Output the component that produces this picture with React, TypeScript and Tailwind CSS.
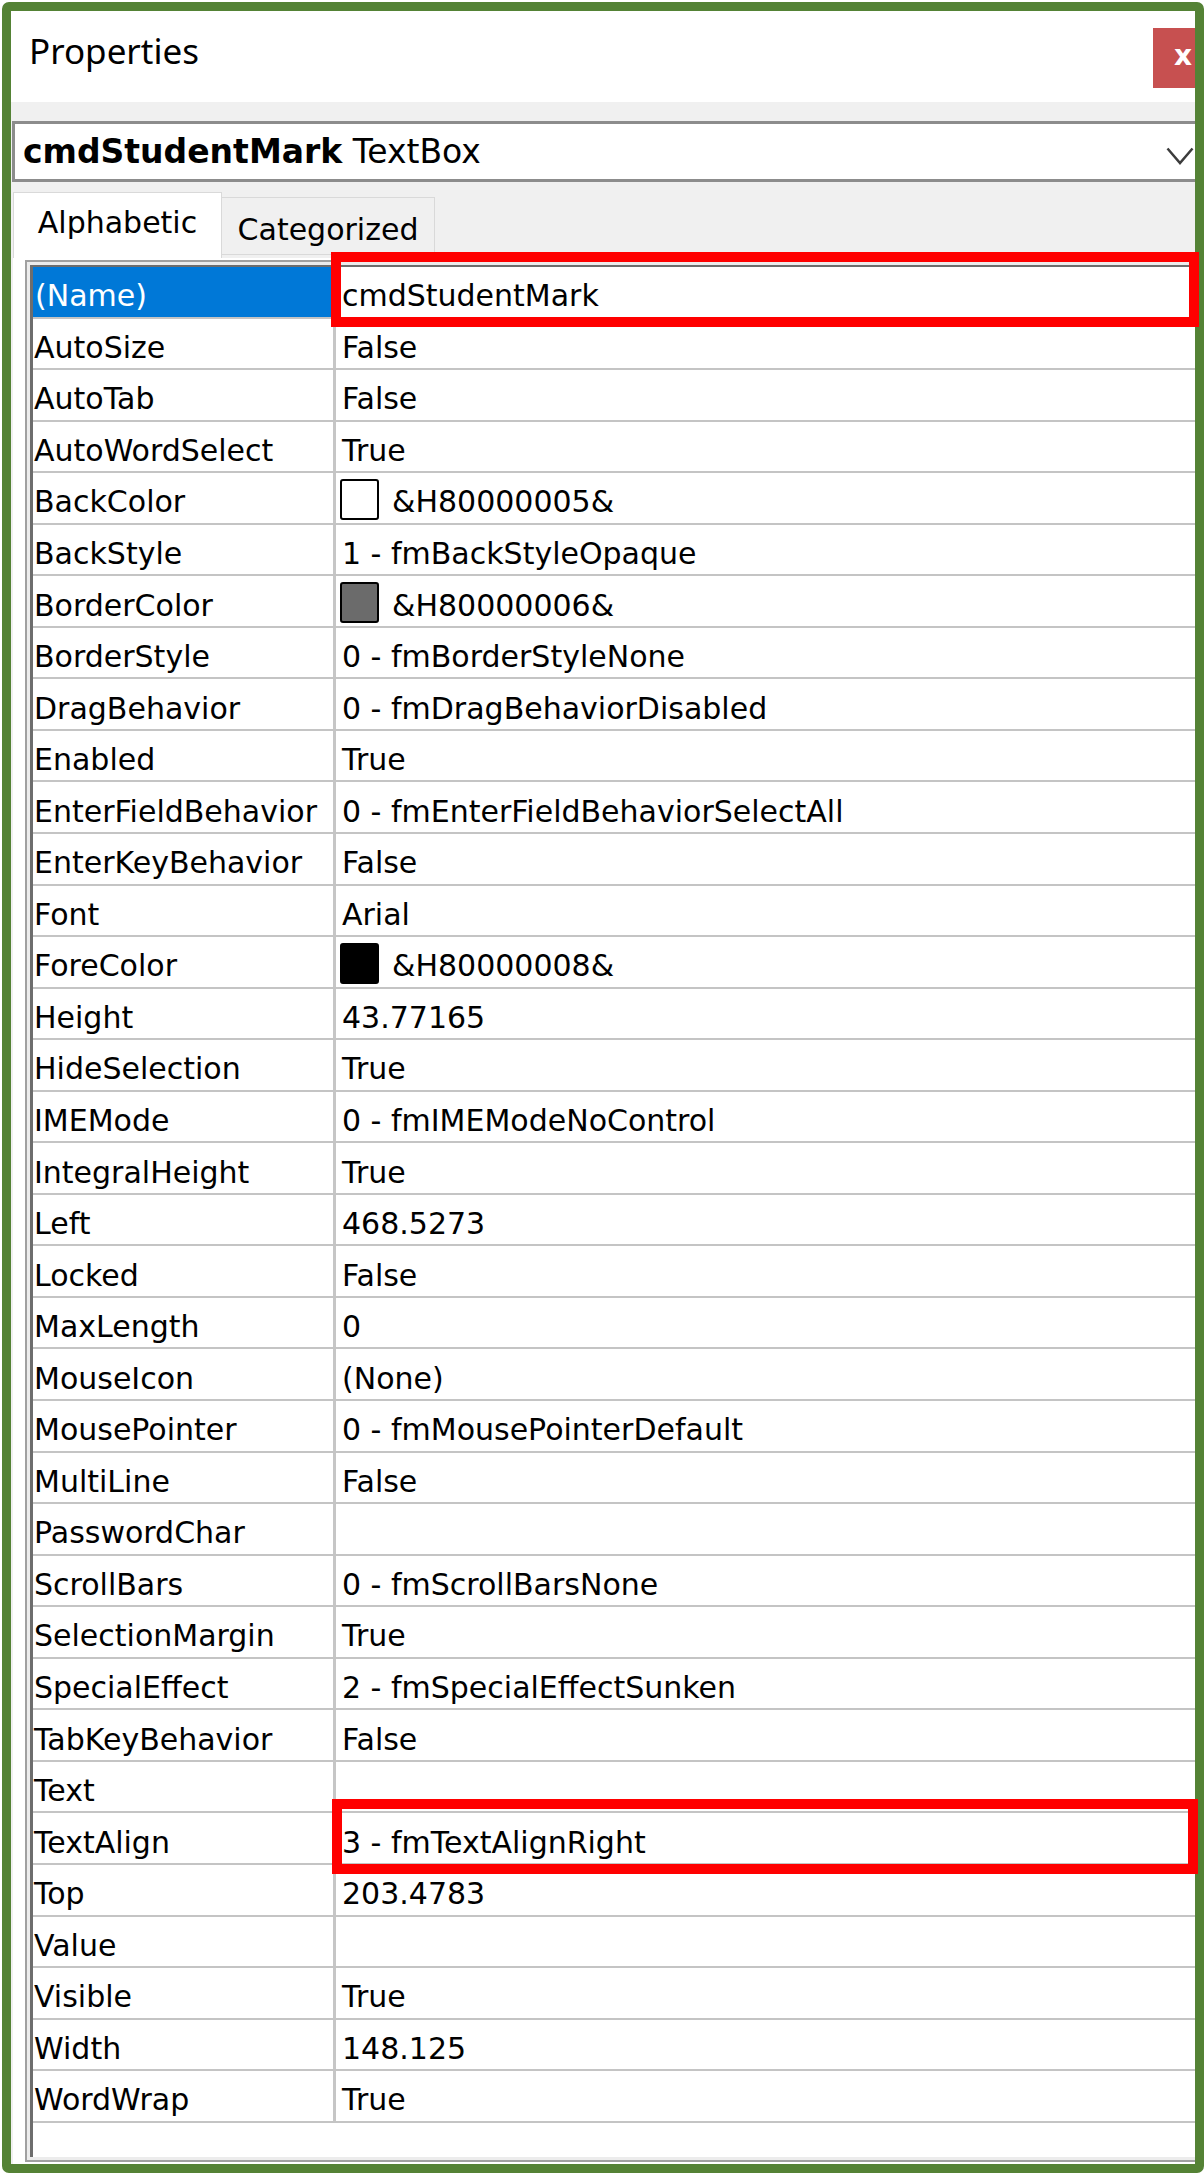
import React from "react";

type Row = {
  name: string;
  value?: string;
  swatch?: string;
  selected?: boolean;
};

const rows: Row[] = [
  { name: "(Name)", value: "cmdStudentMark", selected: true },
  { name: "AutoSize", value: "False" },
  { name: "AutoTab", value: "False" },
  { name: "AutoWordSelect", value: "True" },
  { name: "BackColor", value: "&H80000005&", swatch: "bg-white" },
  { name: "BackStyle", value: "1 - fmBackStyleOpaque" },
  { name: "BorderColor", value: "&H80000006&", swatch: "bg-[#6b6b6b]" },
  { name: "BorderStyle", value: "0 - fmBorderStyleNone" },
  { name: "DragBehavior", value: "0 - fmDragBehaviorDisabled" },
  { name: "Enabled", value: "True" },
  { name: "EnterFieldBehavior", value: "0 - fmEnterFieldBehaviorSelectAll" },
  { name: "EnterKeyBehavior", value: "False" },
  { name: "Font", value: "Arial" },
  { name: "ForeColor", value: "&H80000008&", swatch: "bg-black" },
  { name: "Height", value: "43.77165" },
  { name: "HideSelection", value: "True" },
  { name: "IMEMode", value: "0 - fmIMEModeNoControl" },
  { name: "IntegralHeight", value: "True" },
  { name: "Left", value: "468.5273" },
  { name: "Locked", value: "False" },
  { name: "MaxLength", value: "0" },
  { name: "MouseIcon", value: "(None)" },
  { name: "MousePointer", value: "0 - fmMousePointerDefault" },
  { name: "MultiLine", value: "False" },
  { name: "PasswordChar", value: "" },
  { name: "ScrollBars", value: "0 - fmScrollBarsNone" },
  { name: "SelectionMargin", value: "True" },
  { name: "SpecialEffect", value: "2 - fmSpecialEffectSunken" },
  { name: "TabKeyBehavior", value: "False" },
  { name: "Text", value: "" },
  { name: "TextAlign", value: "3 - fmTextAlignRight" },
  { name: "Top", value: "203.4783" },
  { name: "Value", value: "" },
  { name: "Visible", value: "True" },
  { name: "Width", value: "148.125" },
  { name: "WordWrap", value: "True" },
];

function PropRow({ row }: { row: Row }) {
  return (
    <div className="flex h-[51.55px] shrink-0 border-b-2 border-[#c4c4c4]">
      <div
        className={
          row.selected
            ? "w-[303px] shrink-0 border-r-[3px] border-[#c6c6c6] bg-[#0078d7] text-white flex items-center pt-[8px] pl-[2px] whitespace-nowrap"
            : "w-[303px] shrink-0 border-r-[3px] border-[#c6c6c6] text-black flex items-center pt-[8px] pl-[1px] whitespace-nowrap"
        }
      >
        <span className="leading-[35px]">{row.name}</span>
      </div>
      {row.swatch ? (
        <div className="flex-1 flex items-center pt-[8px] pl-[4px] whitespace-nowrap text-black">
          <div
            className={
              "self-start -mt-[2px] w-[39px] h-[41px] shrink-0 border-2 border-black rounded-[3px] " +
              row.swatch
            }
          />
          <span className="ml-[13px] leading-[35px]">{row.value}</span>
        </div>
      ) : (
        <div className="flex-1 flex items-center pt-[8px] pl-[6px] whitespace-nowrap text-black">
          <span className="leading-[35px]">{row.value}</span>
        </div>
      )}
    </div>
  );
}

export default function App() {
  return (
    <div className="relative w-[1204px] h-[2174px] bg-white pl-[2px] pt-[2px] font-['DejaVu_Sans',sans-serif]">
      <div className="w-[1202px] h-[2171px] border-[9px] border-[#548235] rounded-[7px] overflow-hidden flex flex-col bg-[#f0f0f0]">
        {/* Title bar */}
        <div className="h-[91px] shrink-0 bg-white flex items-start justify-between">
          <span className="pl-[18px] mt-[16px] leading-[48px] text-[35px] text-black font-['Noto_Sans',sans-serif]">
            Properties
          </span>
          <div className="mt-[17px] w-[60px] h-[60px] shrink-0 -mr-[18px] bg-[#c75050] flex items-center justify-center text-white font-bold text-[28px] leading-none pb-[4px]">
            x
          </div>
        </div>
        <div className="h-[19px] shrink-0" />
        {/* Object combo */}
        <div className="h-[61px] shrink-0 ml-[1px] bg-white border-l-[3px] border-y-[3px] border-[#8c8c8c] flex items-center pl-[8px] text-[33px] text-black whitespace-nowrap">
          <span className="leading-[38px]">
            <span className="font-bold">cmdStudentMark</span> TextBox
          </span>
          <svg
            className="ml-auto mr-[1px] mt-[8px] shrink-0"
            width="28"
            height="18"
            viewBox="0 0 28 18"
            fill="none"
          >
            <path d="M1.5 1.5 L14 16 L26.5 1.5" stroke="#3c3c3c" strokeWidth="2.5" />
          </svg>
        </div>
        <div className="h-[10px] shrink-0" />
        {/* Tabs */}
        <div className="h-[66px] shrink-0 ml-[2px] flex items-start text-[30px] text-black">
          <div className="w-[209px] h-[66px] bg-white border-t border-x border-[#d9d9d9] text-center pt-[12px] leading-[35px]">
            Alphabetic
          </div>
          <div className="mt-[5px] w-[213px] h-[58px] bg-[#f0f0f0] border-t border-r border-b border-[#d9d9d9] text-center pt-[14px] leading-[35px]">
            Categorized
          </div>
        </div>
        {/* Panel */}
        <div className="flex-1 ml-[2px] bg-white pl-[12px] pt-[2px] pb-[2px] flex flex-col text-[30px]">
          <div className="flex-1 flex flex-col border-l-2 border-t-2 border-b-2 border-[#a0a0a0] bg-[#ececec] pl-[3px] pt-[3px] pb-[3px]">
            <div className="flex-1 flex flex-col bg-white border-l-[3px] border-t-2 border-[#6d6d6d] overflow-hidden">
              {rows.map((r) => (
                <PropRow key={r.name} row={r} />
              ))}
            </div>
          </div>
        </div>
      </div>
      {/* Red highlight annotations */}
      <div className="absolute left-[331px] top-[252px] w-[868px] h-[75px] border-[10px] border-[#ff0000]" />
      <div className="absolute left-[332px] top-[1799px] w-[866px] h-[75px] border-[10px] border-[#ff0000]" />
    </div>
  );
}
